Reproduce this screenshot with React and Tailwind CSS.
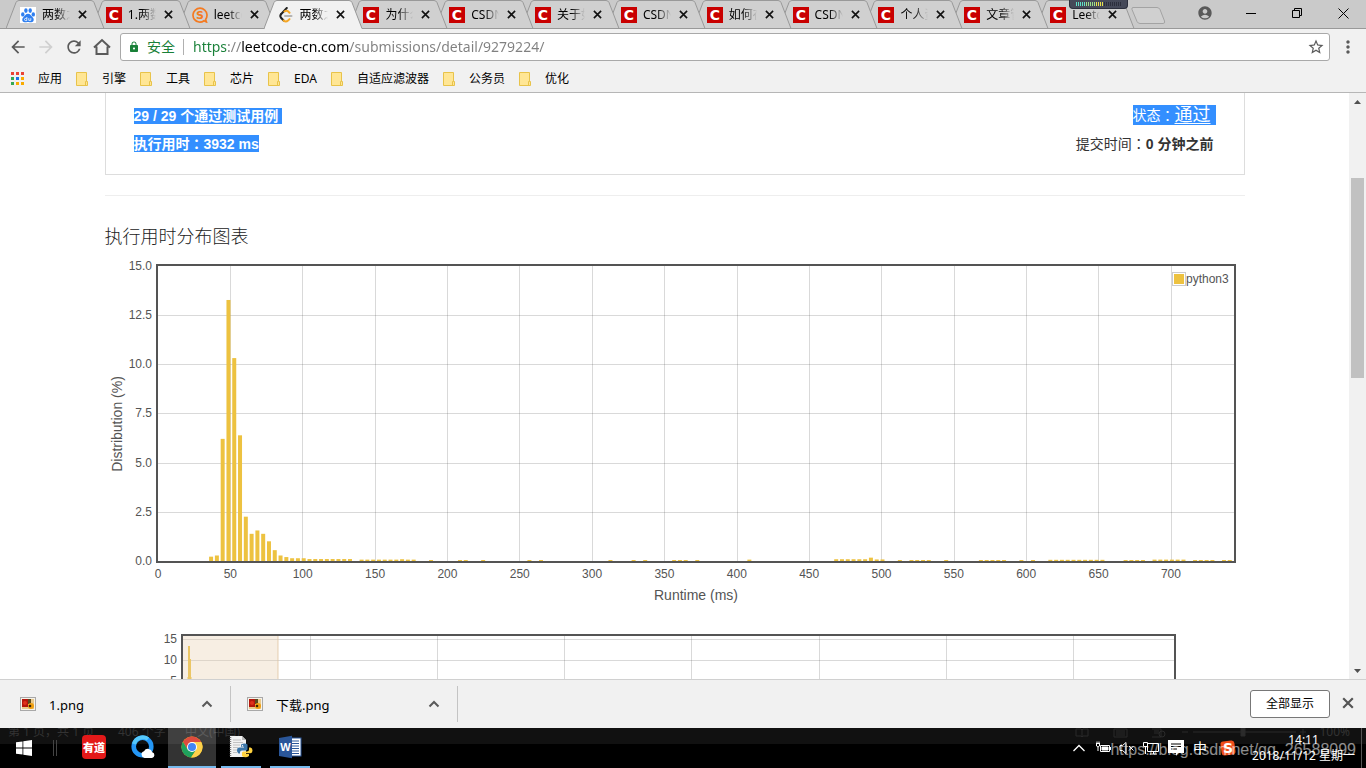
import React, { useState } from 'react';
import { MdArrowBack, MdArrowForward, MdRefresh, MdLock, MdStarBorder, MdMoreVert, MdAccountCircle } from 'react-icons/md';

const tabs = [
  { title: '两数之和', icon: 'baidu' },
  { title: '1.两数之和', icon: 'csdn' },
  { title: 'leetcode', icon: 'sogou' },
  { title: '两数之和', icon: 'leetcode' },
  { title: '为什么', icon: 'csdn' },
  { title: 'CSDN', icon: 'csdn' },
  { title: '关于如何', icon: 'csdn' },
  { title: 'CSDN', icon: 'csdn' },
  { title: '如何在', icon: 'csdn' },
  { title: 'CSDN', icon: 'csdn' },
  { title: '个人资料', icon: 'csdn' },
  { title: '文章管理', icon: 'csdn' },
  { title: 'Leetcode', icon: 'csdn' },
];

const bookmarks = ['引擎', '工具', '芯片', 'EDA', '自适应滤波器', '公务员', '优化'];

const downloads = ['1.png', '下载.png'];

// share of submissions (%) per runtime (ms)
const mainBars = [
  [36, 0.22], [40, 0.28], [44, 6.2], [48, 13.25], [52, 10.3], [56, 6.38], [60, 2.25], [64, 1.38], [68, 1.55],
  [72, 1.38], [76, 1.0], [80, 0.55], [84, 0.28], [88, 0.2], [92, 0.14], [96, 0.14], [100, 0.14],
  [168, 0.09], [408, 0.07], [492, 0.17],
];

// runs of tiny bars: from, to, value
const tailRuns = [
  [104, 132, 0.1], [140, 164, 0.07], [172, 176, 0.07], [188, 188, 0.05], [208, 212, 0.05], [224, 224, 0.05],
  [256, 256, 0.05], [264, 264, 0.05], [312, 312, 0.05], [328, 328, 0.05], [336, 336, 0.05], [356, 364, 0.05],
  [372, 372, 0.05], [468, 488, 0.09], [496, 500, 0.08], [512, 512, 0.05], [520, 532, 0.05], [544, 544, 0.05],
  [568, 584, 0.05], [596, 596, 0.05], [604, 604, 0.05], [616, 652, 0.06], [668, 680, 0.05], [688, 708, 0.07],
  [716, 728, 0.05], [736, 740, 0.05],
];

const bars = [...mainBars];
tailRuns.forEach(([from, to, value]) => {
  for (let ms = from; ms <= to; ms += 4) bars.push([ms, value]);
});

const Favicon = ({ name }) => {
  if (name === 'baidu') {
    return (
      <svg className="size-4 shrink-0" viewBox="0 0 16 16" fill="#2f7ff0">
        <rect width="16" height="16" fill="#fff" />
        <ellipse cx="2.8" cy="7.4" rx="1.7" ry="2.2" />
        <ellipse cx="5.9" cy="3.6" rx="1.7" ry="2.4" />
        <ellipse cx="10.2" cy="3.6" rx="1.7" ry="2.4" />
        <ellipse cx="13.3" cy="7.4" rx="1.7" ry="2.2" />
        <path d="M8 6.8c2.4 0 3 2 4.600 3.500 2 1.900 1.200 5-1.300 5-1.300 0-2-.4-3.300-.4s-2 .4-3.300.4c-2.500 0-3.300-3.100-1.300-5C5 8.800 5.600 6.800 8 6.800z" />
        <path d="M6.800 10v3.600H5.600a1 1 0 010-2.200h1M8.800 11.200v2.200h2v-2.200" fill="none" stroke="#fff" strokeWidth=".8" />
      </svg>
    );
  }
  if (name === 'sogou') {
    return (
      <svg className="size-4 shrink-0" viewBox="0 0 16 16">
        <path d="M13.600 12.400A7 7 0 102.400 12.400 7 7 0 0012 13.700l2.400 1.200z" fill="none" stroke="#f47a20" strokeWidth="1.700" />
        <text x="8" y="12" textAnchor="middle" fontFamily="DejaVu Sans" fontWeight="bold" fontSize="11" fill="#f47a20">S</text>
      </svg>
    );
  }
  if (name === 'leetcode') {
    return (
      <svg className="size-4 shrink-0" viewBox="0 0 16 16" fill="none" strokeWidth="2" strokeLinecap="round">
        <path d="M8.800 1L3 7.200" stroke="#222" />
        <path d="M3 7.200Q1.600 9 3 10.800l2.600 2.700" stroke="#222" />
        <path d="M5.600 13.500Q7.800 15.600 10 13.600l1.500-1.500M6.500 4.500Q8.500 3 10 4.200l1.500 1.500" stroke="#f5a623" />
        <path d="M7 9h6.500" stroke="#b3b3b3" />
      </svg>
    );
  }
  return (
    <svg className="size-4 shrink-0" viewBox="0 0 16 16">
      <rect width="16" height="16" fill="#c90000" />
      <text x="8" y="13" textAnchor="middle" fontFamily="DejaVu Sans" fontWeight="bold" fontSize="14" fill="#fff">C</text>
    </svg>
  );
};

const Cross = ({ className }) => (
  <svg className={className} viewBox="0 0 10 10" fill="none" stroke="currentColor" strokeWidth="1.800">
    <path d="M1 1l8 8M9 1L1 9" />
  </svg>
);

const TabShape = ({ active }) => (
  <svg className="absolute left-0 top-0 h-[29px] w-[99px]" viewBox="0 0 99 29">
    <path d="M0 28.500L10 2.500Q11 .5 13 .5H85Q87 .5 88 2.500L98 28.500" fill={active ? '#f1f1f1' : '#d0d0d0'} stroke="#999" />
    {active && <path d="M1 28.500H97.500" stroke="#f1f1f1" />}
    {!active && <path d="M0 28.500H99" stroke="#999" />}
  </svg>
);

const Tab = ({ tab, index, active, onSelect }) => (
  <div className="relative h-[29px] min-w-0 flex-1" style={{ zIndex: active ? 30 : 20 - index }}>
    <TabShape active={active} />
    <div className="relative flex h-[29px] w-[86px] items-center pl-[14px]">
      <button role="tab" aria-selected={active} onClick={() => onSelect(index)} className="flex items-center gap-[6px]">
        <Favicon name={tab.icon} />
        <span className="w-7 overflow-hidden whitespace-nowrap text-left text-xs text-black [mask-image:linear-gradient(to_right,#000_50%,transparent)]">{tab.title}</span>
      </button>
      <button aria-label="关闭标签页" className="ml-2">
        <Cross className="size-[9px] text-[#111]" />
      </button>
    </div>
  </div>
);

const TabStrip = () => {
  const [selected, setSelected] = useState(3);
  return (
    <div className="relative flex h-[29px] bg-[#cacaca] pl-[6px]">
      <div className="absolute inset-x-0 bottom-0 h-px bg-[#999]" />
      <div role="tablist" className="flex max-w-[1116px] flex-1">
        {tabs.map((tab, i) => <Tab key={i} tab={tab} index={i} active={i === selected} onSelect={setSelected} />)}
      </div>
      <button aria-label="新标签页" className="ml-[9px] self-start pt-[7px]">
        <svg className="h-[17px] w-[35px]" viewBox="0 0 35 17" fill="#d0d0d0" stroke="#a3a3a3">
          <path d="M2 .5H26Q28 .5 29 2.500L33.500 14Q34.300 16.500 32 16.500H9Q7 16.500 6 14.500L1 2.500Q.5 .5 2 .5z" />
        </svg>
      </button>
      <div className="ml-auto flex items-center pb-[3px] text-black">
        <button aria-label="用户" className="flex w-[46px] justify-center"><MdAccountCircle className="size-4 text-[#5a5a5a]" /></button>
        <button aria-label="最小化" className="flex w-[46px] justify-center"><span className="h-px w-[10px] bg-black" /></button>
        <button aria-label="还原" className="flex w-[46px] justify-center">
          <svg className="size-[11px]" viewBox="0 0 11 11" fill="none" stroke="#000"><path d="M.5 2.500h7v7h-7zM2.500 2.500v-2h7v7h-2" /></svg>
        </button>
        <button aria-label="关闭" className="flex w-[46px] justify-center">
          <svg className="size-[11px]" viewBox="0 0 11 11" fill="none" stroke="#000"><path d="M.5 .5l10 10M10.500 .5l-10 10" /></svg>
        </button>
      </div>
      <div className="absolute left-[1069px] top-0 z-40 flex h-[9px] w-[59px] items-start justify-center rounded-b-sm border border-t-0 border-[#2c2f3d] bg-[#454959] pt-[2px]">
        <svg className="h-1 w-[46px]" viewBox="0 0 46 4">
          {Array.from({ length: 23 }, (_, i) => (
            <rect key={i} x={i * 2} width="1" height="4" fill={i < 5 ? '#5fe0c8' : i < 10 ? '#9be08a' : i < 14 ? '#e8e04c' : '#2c2f3d'} />
          ))}
        </svg>
      </div>
    </div>
  );
};

const Toolbar = () => (
  <div className="flex h-[35px] items-center bg-[#f1f1f1] pl-2 pr-2 text-[#5a5a5a]">
    <button aria-label="后退"><MdArrowBack className="size-5" /></button>
    <button aria-label="前进" className="ml-2"><MdArrowForward className="size-5 text-[#cfcfcf]" /></button>
    <button aria-label="刷新" className="ml-2"><MdRefresh className="size-5" /></button>
    <button aria-label="主页" className="ml-2">
      <svg className="size-5" viewBox="0 0 20 20" fill="none" stroke="currentColor" strokeWidth="2">
        <path d="M2 10.500L10 3l8 7.500M4.500 9.500V17h11V9.500" />
      </svg>
    </button>
    <div className="ml-2 flex h-7 flex-1 items-center rounded-[3px] border border-[#a9a9a9] bg-white pl-[7px] pr-1">
      <MdLock className="size-3 text-[#188038]" />
      <label htmlFor="url" className="ml-[7px] text-sm text-[#188038]">安全</label>
      <span className="mx-2 h-4 w-px bg-[#b0b0b0]" />
      <input
        id="url"
        defaultValue="https://leetcode-cn.com/submissions/detail/9279224/"
        className="min-w-0 flex-1 bg-[linear-gradient(to_right,#188038_0_35px,#808080_35px_49px,#000_49px_158px,#808080_158px)] bg-clip-text pl-px text-sm text-transparent outline-none"
      />
      <button aria-label="收藏"><MdStarBorder className="size-[18px]" /></button>
    </div>
    <button aria-label="菜单" className="ml-2"><MdMoreVert className="size-5" /></button>
  </div>
);

const BookmarkBar = () => (
  <nav className="flex h-[29px] items-center gap-[14px] border-b border-[#b6b6b6] bg-[#f1f1f1] pl-[11px] pt-px text-xs text-black">
    <a href="#apps" className="flex items-center gap-[14px]">
      <svg className="size-[13px]" viewBox="0 0 13 13">
        {['#ea4335', '#ea4335', '#ea4335', '#34a853', '#1a73e8', '#f9ab00', '#34a853', '#f9ab00', '#f9ab00'].map((c, i) => (
          <rect key={i} x={(i % 3) * 5} y={Math.floor(i / 3) * 5} width="3" height="3" fill={c} />
        ))}
      </svg>
      应用
    </a>
    {bookmarks.map(name => (
      <a key={name} href="#folder" className="flex items-center gap-[14px] whitespace-nowrap">
        <svg className="h-[14px] w-3" viewBox="0 0 12 14" fill="#ffe695" stroke="#e8c34a">
          <path d="M.5 .5h10v9h1v4H.5zM9.500 13V9.500h1" />
        </svg>
        {name}
      </a>
    ))}
  </nav>
);

// the full-width colon sits in the middle of its box in this face
const Colon = () => <span className="font-['Noto_Sans_CJK_TC',sans-serif]">：</span>;

const ResultCard = () => (
  <section className="flex justify-between border border-t-0 border-[#ddd] px-7 pb-[18px] pt-[10px] text-sm text-[#333]">
    <div className="flex flex-col items-start gap-[11px] pt-[5px] font-bold leading-4 text-white">
      <p className="bg-[#338fff] pr-1">29 / 29 个通过测试用例</p>
      <p className="bg-[#338fff]">执行用时<Colon />3932 ms</p>
    </div>
    <div className="flex flex-col items-end gap-[6px] pt-[2px]">
      <p className="flex h-5 items-center bg-[#338fff] pr-[5px] leading-5 text-white">
        状态<Colon /><a href="#status" className="text-lg leading-5 underline decoration-1 underline-offset-2">通过</a>
      </p>
      <p className="pr-[2px] leading-6">提交时间<Colon /><b>0 分钟之前</b></p>
    </div>
  </section>
);

const DistributionChart = () => {
  const px = ms => 53 + ms * 1.447;
  const py = pct => 303 - pct * 19.7;
  return (
    <svg className="block w-full" viewBox="0 0 1140 450" fontSize="12" fill="#545454">
      {Array.from({ length: 15 }, (_, i) => i * 50).map(ms => (
        <g key={ms}>
          {ms > 0 && <rect x={Math.floor(px(ms) + 0.2)} y="8" width="1" height="295" fill="#545454" fillOpacity=".22" />}
          <text x={px(ms)} y="320" textAnchor="middle">{ms}</text>
        </g>
      ))}
      {[0, 2.5, 5, 7.5, 10, 12.5, 15].map(pct => (
        <g key={pct}>
          {pct > 0 && pct < 15 && <rect x="53" y={Math.round(py(pct))} width="1076" height="1" fill="#545454" fillOpacity=".22" />}
          <text x="47" y={Math.round(py(pct)) + 4} textAnchor="end">{pct.toFixed(1)}</text>
        </g>
      ))}
      {bars.map(([ms, pct]) => (
        <rect key={ms} x={px(ms) - 1} y={py(pct)} width="4" height={pct * 19.7} fill="#edc240" />
      ))}
      <rect x="52" y="7" width="1078" height="297" fill="none" stroke="#545454" strokeWidth="2" />
      <rect x="1067.500" y="14.500" width="13" height="13" fill="#fff" stroke="#ccc" />
      <rect x="1069" y="16" width="10" height="10" fill="#edc240" />
      <text x="1081" y="25">python3</text>
      <text x="591" y="342" textAnchor="middle" fontSize="14">Runtime (ms)</text>
      <text transform="translate(17 166) rotate(-90)" textAnchor="middle" fontSize="14">Distribution (%)</text>

      {/* overview */}
      {[205, 332, 459, 586, 714, 841, 968].map(x => <rect key={x} x={x} y="377" width="1" height="80" fill="#545454" fillOpacity=".22" />)}
      {[15, 10, 5].map((v, i) => (
        <g key={v}>
          <rect x="77" y={381 + i * 21} width="993" height="1" fill="#545454" fillOpacity=".22" />
          <text x="72" y={385 + i * 21} textAnchor="end">{v}</text>
        </g>
      ))}
      <path d="M82.500 460V419h.5V388h2V401h1V419h.5V460z" fill="#edc240" />
      <rect x="77" y="377" width="96" height="90" fill="#e8cfb0" fillOpacity=".35" stroke="#e0c3a0" strokeOpacity=".8" />
      <rect x="77" y="377" width="993" height="100" fill="none" stroke="#545454" strokeWidth="2" />
    </svg>
  );
};

const Scrollbar = () => (
  <div className="flex w-[17px] flex-col items-center justify-between bg-[#f1f1f1]">
    <button aria-label="向上滚动" className="flex h-[17px] items-center">
      <svg className="h-1 w-[7px]" viewBox="0 0 7 4" fill="#505050"><path d="M0 4L3.500 0 7 4z" /></svg>
    </button>
    <div className="flex w-full flex-1 justify-center pt-[68px]"><div className="h-[200px] w-[13px] bg-[#c1c1c1]" /></div>
    <button aria-label="向下滚动" className="flex h-[17px] items-center">
      <svg className="h-1 w-[7px]" viewBox="0 0 7 4" fill="#505050"><path d="M0 0L3.500 4 7 0z" /></svg>
    </button>
  </div>
);

const Chevron = ({ className }) => (
  <svg className={className} viewBox="0 0 12 8" fill="none" stroke="currentColor" strokeWidth="2"><path d="M1.500 6.500L6 2l4.500 4.500" /></svg>
);

const DownloadShelf = () => (
  <footer className="flex h-[49px] items-center border-t border-[#d0d0d0] bg-[#f1f1f1] text-[13px] text-black">
    {downloads.map((file, i) => (
      <div key={file} className={`flex h-9 items-center border-r border-[#c4c4c4] pr-[17px] ${i === 0 ? 'w-[231px] pl-5' : 'w-[227px] pl-4'}`}>
        <button className="flex items-center gap-[13px]">
          <svg className="h-[14px] w-4" viewBox="0 0 16 14">
            <rect x=".5" y=".5" width="15" height="13" fill="#f7f3ea" stroke="#a8a8a8" />
            <rect x="2" y="2" width="12" height="10" fill="#e9c98c" />
            <path d="M2 2h6v8H2z" fill="#b5160c" />
            <circle cx="5" cy="6" r="2" fill="#e0301c" />
            <path d="M8 2h3v5H8z" fill="#5a4a20" />
            <circle cx="11" cy="9" r="3" fill="#f0a010" />
            <circle cx="10" cy="9" r="1.300" fill="#3a2408" />
          </svg>
          <span className="pt-1">{file}</span>
        </button>
        <button aria-label="更多" className="ml-auto"><Chevron className="h-2 w-3 text-[#5a5a5a]" /></button>
      </div>
    ))}
    <button className="ml-auto h-7 w-20 rounded-[3px] border border-[#777] bg-white text-xs">全部显示</button>
    <button aria-label="关闭" className="mx-3 pb-[2px]"><Cross className="size-3 text-[#555]" /></button>
  </footer>
);

const WindowsLogo = () => (
  <svg className="size-4" viewBox="0 0 16 16" fill="#fff">
    <path d="M0 2.300L6.500 1.400V7.600H0zM7.300 1.300L16 0V7.600H7.300zM0 8.400H6.500V14.600L0 13.700zM7.300 8.400H16V16L7.300 14.700z" />
  </svg>
);

const YoudaoLogo = () => (
  <span className="flex size-6 items-center justify-center rounded bg-[#e31919] text-[11px] font-black leading-none text-white">有道</span>
);

const QQBrowserLogo = () => (
  <svg className="size-6" viewBox="0 0 24 24">
    <circle cx="11.500" cy="11.500" r="8.800" fill="none" stroke="#2496f5" strokeWidth="4.600" />
    <path d="M3 9a9 9 0 0114-5" fill="none" stroke="#55c8fb" strokeWidth="4" />
    <path d="M13.500 23a3.500 3.500 0 01-.5-6.800 4.500 4.500 0 018.300 1A3 3 0 0121 23z" fill="#fff" />
  </svg>
);

const ChromeLogo = () => (
  <svg className="size-[22px]" viewBox="0 0 48 48">
    <circle cx="24" cy="24" r="23" fill="#fbc116" />
    <path d="M4.100 12.500A23 23 0 0143.900 12.500L44 13H24L14.500 29.500z" fill="#dd4b3e" />
    <path d="M4.100 12.500A23 23 0 0022 47L33.500 29.500 14.500 29.500z" fill="#1fa15d" />
    <path d="M24 13H44A23 23 0 0122 47L33.500 29.500z" fill="#fdd14b" />
    <circle cx="24" cy="24" r="11" fill="#fff" />
    <circle cx="24" cy="24" r="8.800" fill="#4285f4" />
  </svg>
);

const PythonFileLogo = () => (
  <svg className="size-6" viewBox="0 0 24 24">
    <path d="M1 1h12l4 4v17H1z" fill="#f2f2f2" />
    <path d="M13 1v4h4" fill="#bbb" />
    <path d="M1.500 2v20" stroke="#777" strokeWidth="1.500" strokeDasharray="1 1" />
    <path d="M4 5h8M4 7.500h10M4 10h7M4 12.500h5M4 15h4M4 17.500h4" stroke="#b5b5b5" strokeWidth=".8" />
    <path d="M12 9.500q4-2 6.500 0V14q0 1.500-1.500 1.500h-4q-2 0-2 2v1H9.500Q8 18 8 15.200t2-2.700h5v-.8h-3z" fill="#3a75a8" />
    <path d="M20 12.500h1.500q2 .5 2 3t-2 2.700h-5v.8h3.500v2q-3.500 2.500-7 0v-3q0-1.500 1.500-1.500h3.500q2 0 2-2z" fill="#ffd23f" />
    <circle cx="13.500" cy="10.700" r=".7" fill="#fff" />
  </svg>
);

const WordLogo = () => (
  <svg className="size-6" viewBox="0 0 24 24">
    <rect x="12" y="3" width="11" height="18" fill="#fff" stroke="#2a5699" />
    <path d="M14 6h7M14 8.500h7M14 11h7M14 13.500h7M14 16h7M14 18.500h7" stroke="#2a5699" />
    <path d="M1 3L14 .8V23.200L1 21z" fill="#2a5699" />
    <text x="7.500" y="16" textAnchor="middle" fontFamily="Liberation Sans" fontWeight="bold" fontSize="11" fill="#fff">W</text>
  </svg>
);

const apps = [
  { name: '有道', Logo: YoudaoLogo },
  { name: 'QQ浏览器', Logo: QQBrowserLogo },
  { name: 'Chrome', Logo: ChromeLogo, state: 'active' },
  { name: 'Python', Logo: PythonFileLogo, state: 'open' },
  { name: 'Word', Logo: WordLogo, state: 'open' },
];

// the word processor's status bar showing faintly through the taskbar
const GhostStatusBar = () => (
  <div className="absolute inset-x-0 top-0 flex h-4 items-start overflow-hidden bg-[#111] pl-2 text-xs leading-[8px] text-[#333]">
    <span className="w-[110px] whitespace-nowrap">第 1 页，共 1 页</span>
    <span className="w-[67px] whitespace-nowrap">406 个字</span>
    <span>中文(中国)</span>
    <svg className="ml-auto mr-1 h-[11px] w-[240px]" viewBox="0 0 240 11" fill="none" stroke="#2b2b2b">
      <path d="M1 1h5l1 1 1-1h5v7H8L7 9 6 8H1zM7 2v7M39 1h13v8H39zM41 3h9M41 5h9M41 7h9M77 1h9v8h-9M79 3h5M79 5h5" />
      <circle cx="87" cy="6" r="3" />
      <path d="M107 4h6M118 4h103M225 4h6M228 1v6" />
      <path d="M166 0h4v8h-4z" fill="#2b2b2b" />
    </svg>
    <span className="pr-4">100%</span>
  </div>
);

const Taskbar = () => (
  <div className="relative flex h-10 shrink-0 items-stretch overflow-hidden bg-black text-white">
    <GhostStatusBar />
    <button aria-label="开始" className="relative flex w-12 items-center justify-center"><WindowsLogo /></button>
    <div className="relative flex w-[22px] items-center gap-[2px] pl-[5px]">
      <span className="h-4 w-px bg-[#444]" />
      <span className="h-4 w-px bg-[#444]" />
    </div>
    <div className="relative flex gap-px">
      {apps.map(({ name, Logo, state }) => (
        <button key={name} aria-label={name} className={`flex w-12 flex-col items-center ${state === 'active' ? 'bg-white/20' : ''}`}>
          <span className="flex flex-1 items-center"><Logo /></span>
          <span className={`h-[2px] ${state === 'active' ? 'w-12 bg-[#76b9ed]' : state === 'open' ? 'w-10 bg-[#76b9ed]' : 'w-10'}`} />
        </button>
      ))}
    </div>
    <div className="relative ml-auto flex items-center">
      <div className="flex items-center gap-2">
        <svg className="h-2 w-3" viewBox="0 0 12 8" fill="none" stroke="#fff" strokeWidth="1.300"><path d="M.5 7L6 1.500 11.500 7" /></svg>
        <svg className="ml-[2px] h-4 w-4" viewBox="0 0 16 16" fill="none" stroke="#fff">
          <path d="M5.500 5.500h9v6h-9zM15.500 7v3M1 3.500h4M2 1.500v2M4 1.500v2M1.500 4v2q1.500 2 3 0V4M3 7v4" />
          <path d="M7 7h6v3H7z" fill="#fff" />
        </svg>
        <svg className="h-4 w-4" viewBox="0 0 16 16" fill="none" stroke="#fff"><path d="M1 5.500h2.500L7 2.500v11L3.500 10.500H1zM10 6l4.500 4.500M14.500 6L10 10.500" /></svg>
        <svg className="h-4 w-[17px]" viewBox="0 0 17 16" fill="none" stroke="#fff"><path d="M4.500 3.500h11v8h-11zM7 14h7M10.500 12v2M.5 2.500h4v4h-4zM2.500 7v7" /></svg>
        <svg className="h-4 w-4" viewBox="0 0 16 16" fill="#fff"><path d="M0 0h16v13H10L8 16V13H0z" /><path d="M3 4h10M3 6.500h10M3 9h6" stroke="#000" /></svg>
        <span className="w-4 text-center text-sm">中</span>
        <svg className="ml-1 h-4 w-4" viewBox="0 0 16 16">
          <rect x="1" y="1" width="14" height="14" rx="3" fill="#f04d1a" transform="rotate(-8 8 8)" />
          <text x="8" y="13" textAnchor="middle" fontFamily="DejaVu Sans" fontWeight="bold" fontSize="14" fill="#fff">S</text>
        </svg>
      </div>
      <div className="ml-4 mr-[6px] whitespace-nowrap text-center text-xs leading-4">
        <div>14:11</div>
        <div>2018/11/12 星期一</div>
      </div>
      <span className="mr-1 h-full w-px bg-[#555]" />
    </div>
    <span className="absolute bottom-2 right-[10px] font-['Liberation_Sans',sans-serif] text-base leading-5 text-white/55">https://blog.csdn.net/qq_26588099</span>
  </div>
);

export default function App() {
  return (
    <div className="flex h-screen flex-col overflow-hidden bg-white font-['Noto_Sans','Noto_Sans_CJK_SC',sans-serif]">
      <header className="shrink-0">
        <TabStrip />
        <Toolbar />
        <BookmarkBar />
      </header>
      <div className="flex min-h-0 flex-1">
        <main className="flex-1 overflow-hidden font-['Liberation_Sans','Noto_Sans_CJK_SC',sans-serif]">
          <div className="mx-auto max-w-[1140px]">
            <ResultCard />
            <hr className="mt-5 border-[#eee]" />
            <h4 className="mt-[27px] text-lg font-light leading-7 text-[#222]">执行用时分布图表</h4>
            <div className="mt-[7px]"><DistributionChart /></div>
          </div>
        </main>
        <Scrollbar />
      </div>
      <DownloadShelf />
      <Taskbar />
    </div>
  );
}
